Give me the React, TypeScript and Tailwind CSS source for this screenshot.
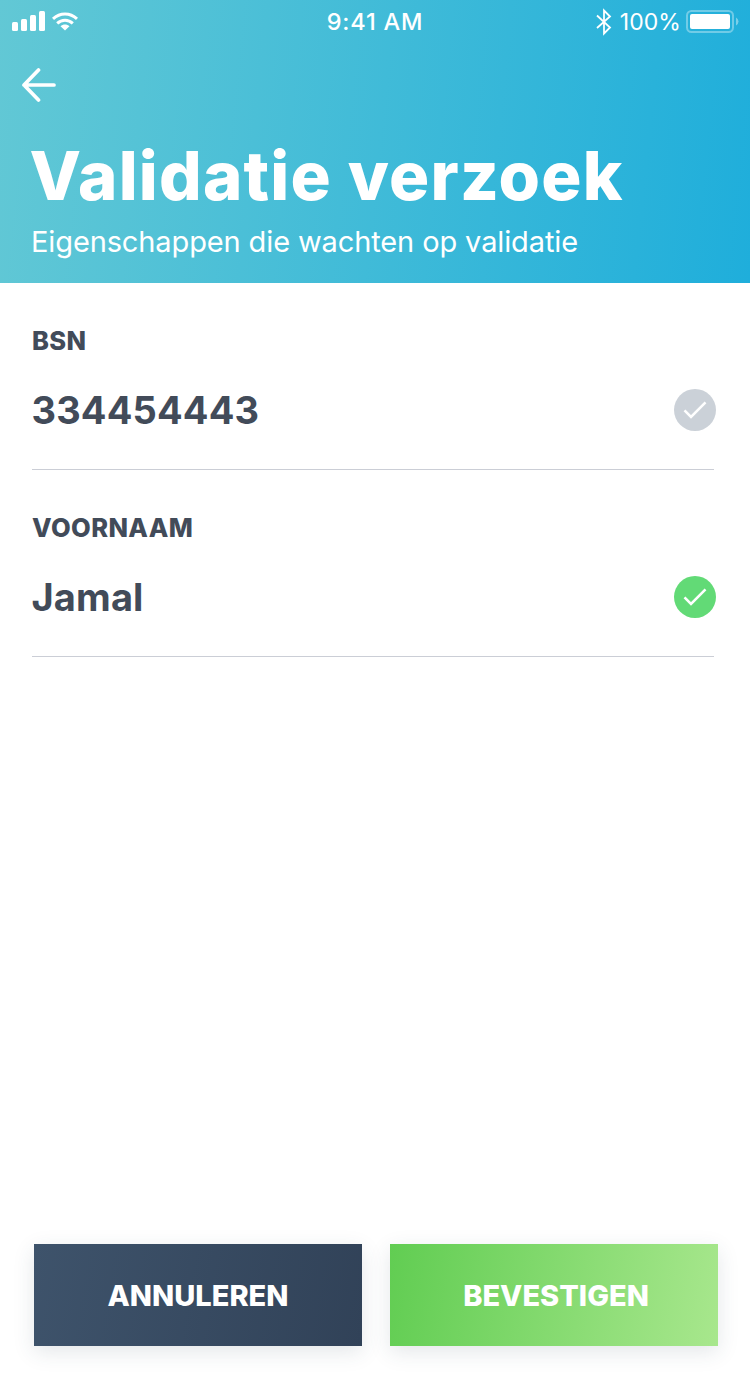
import React from "react";

function StatusBar() {
  return (
    <div className="grid h-[44px] grid-cols-3 items-center px-3 text-[23px]">
      <div className="flex items-center gap-[7px]">
        <svg className="-mt-[2px]" width="33" height="20" viewBox="0 0 33 20" fill="white">
          <rect x="0" y="11" width="6" height="9" rx="1.5" />
          <rect x="9" y="8" width="6" height="12" rx="1.5" />
          <rect x="18" y="4" width="6" height="16" rx="1.5" />
          <rect x="27" y="0" width="6" height="20" rx="1.5" />
        </svg>
        <svg className="-mt-[2px]" width="26" height="19" viewBox="0 0 26 19" fill="none" stroke="white" strokeWidth="3">
          <path d="M1 6.900C8 .2 18 .2 25 6.900M5.200 11.300c4.500-4.200 11.100-4.200 15.600 0" />
          <path d="M8.500 14.200c2.500-2.300 6.500-2.300 9 0L13 18.600Z" fill="white" stroke="none" />
        </svg>
      </div>
      <div className="text-center text-[23.500px] font-[550] tracking-[0.8px]">9:41 AM</div>
      <div className="-mr-px flex items-center justify-end">
        <svg width="16" height="28" viewBox="0 0 16 28" fill="none" stroke="white" strokeWidth="1.800">
          <path d="m1 7.500 13 12-6 6V2.500l6 6L1 20" />
        </svg>
        <span className="ml-[8px] tracking-[0.05px]">100%</span>
        <svg className="ml-[5px]" width="53" height="24" viewBox="0 0 53 24">
          <rect x="1" y="1" width="46" height="21" rx="4.500" fill="none" stroke="white" strokeWidth="2" strokeOpacity=".35" />
          <rect x="4" y="4" width="40" height="15" rx="2" fill="white" />
          <path d="M50 7.500q2.500 1.500 2.500 4t-2.500 4Z" fill="white" fillOpacity=".4" />
        </svg>
      </div>
    </div>
  );
}

function BackArrow() {
  return (
    <svg width="34" height="34" viewBox="0 0 34 34" fill="none" stroke="white" strokeWidth="3.700" strokeLinecap="round" strokeLinejoin="round">
      <path d="M16.500 2 2 17l14.500 15M2 17h30" />
    </svg>
  );
}

function Attribute({ label, value, confirmed }: { label: string; value: string; confirmed: boolean }) {
  return (
    <section className="mr-9 ml-8 h-[187px] border-b border-[#cbced6] pt-[43px] text-[#424b59]">
      <h2 className="text-[25.500px] leading-[30px] font-extrabold tracking-[0.4px]">{label}</h2>
      <div className="-mr-[2px] mt-[33px] flex h-[42px] items-center justify-between">
        <span className="-ml-[0.500px] text-[38px] leading-[42px] font-[650] tracking-[0.15px]">{value}</span>
        <svg className={confirmed ? "text-[#62da76]" : "text-[#cbd1d8]"} width="42" height="42" viewBox="0 0 42 42">
          <circle cx="21" cy="21" r="21" fill="currentColor" />
          <path d="m10.500 21.300 6.500 6.500 14.500-14.500" fill="none" stroke="white" strokeWidth="2.600" />
        </svg>
      </div>
    </section>
  );
}

export default function App() {
  return (
    <div className="flex h-[1380px] w-[750px] flex-col bg-white font-['Inter',sans-serif]">
      <header className="h-[283px] bg-[linear-gradient(96deg,#62c8d5_0%,#29b2da_85%,#1faedb_100%)] text-white">
        <StatusBar />
        <div className="mt-6 ml-[22px]">
          <BackArrow />
        </div>
        <h1 className="mt-[32px] pl-[29.500px] text-[67px] leading-[84px] font-extrabold tracking-[1.200px]">Validatie verzoek</h1>
        <p className="pl-[31px] text-[29px] leading-[48px] font-[380] tracking-[-0.120px]">Eigenschappen die wachten op validatie</p>
      </header>
      <main className="flex-1">
        <Attribute label="BSN" value="334454443" confirmed={false} />
        <Attribute label="VOORNAAM" value="Jamal" confirmed />
      </main>
      <footer className="flex gap-7 pb-[34px] pl-[34px] text-[29px] font-[760] text-white">
        <button className="h-[102px] w-[328px] bg-[linear-gradient(100deg,#3e536b,#314258)] pt-[2px] shadow-[0_6px_20px_rgba(49,66,88,0.13)]">ANNULEREN</button>
        <button className="h-[102px] w-[328px] bg-[linear-gradient(100deg,#61cd52,#a8e78d)] pt-[2px] pl-[4px] shadow-[0_6px_20px_rgba(49,66,88,0.13)]">BEVESTIGEN</button>
      </footer>
    </div>
  );
}
